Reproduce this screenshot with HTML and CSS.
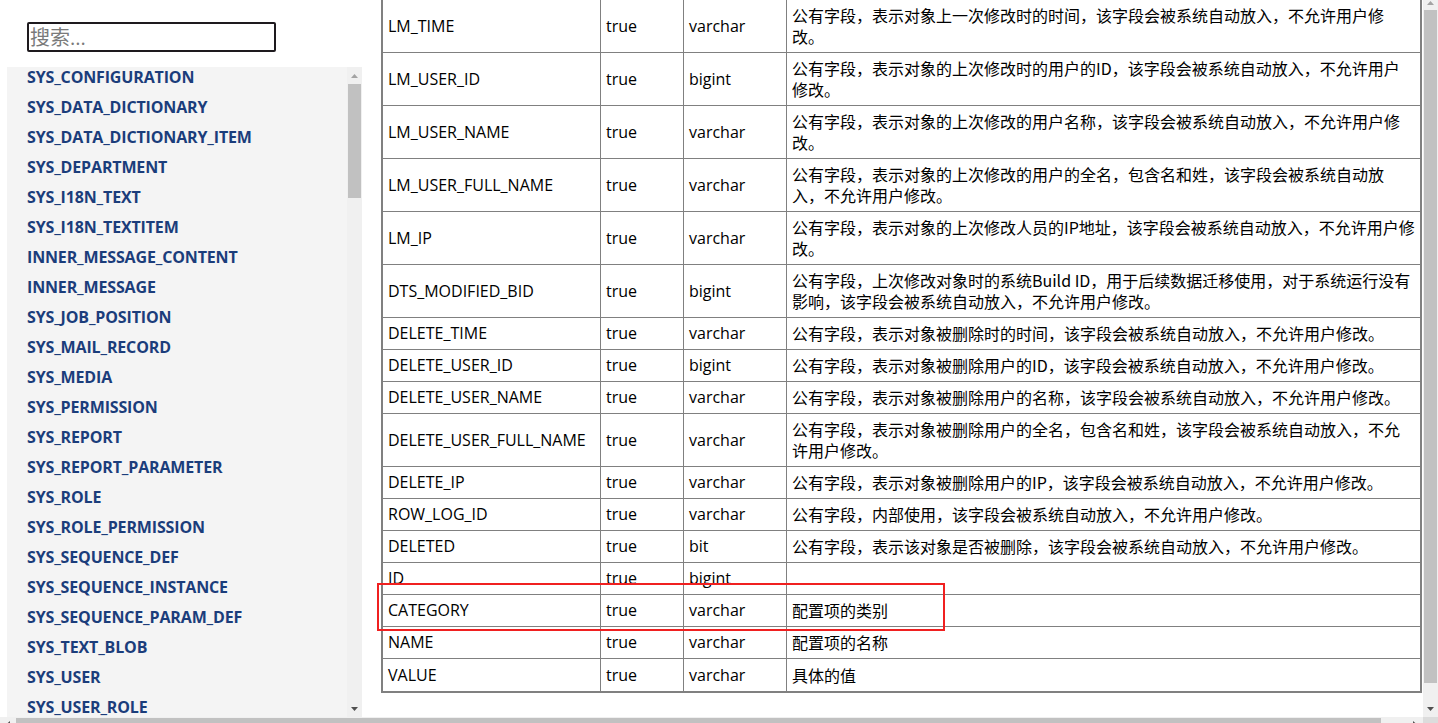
FILE: index.html
```html
<!DOCTYPE html>
<html lang="zh-CN">
<head>
    <meta charset="UTF-8">
    <title>数据字典 - SYS_CONFIGURATION</title>
    <link rel="stylesheet" href="styles.css">
</head>
<body>

<div class="frame">
    <div class="page">
        <aside class="sidebar">
            <input class="search" type="text" placeholder="搜索...">
            <div class="tree">
                <ul class="tree-list">
                    <li><a href="#">SYS_CONFIGURATION</a></li>
                    <li><a href="#">SYS_DATA_DICTIONARY</a></li>
                    <li><a href="#">SYS_DATA_DICTIONARY_ITEM</a></li>
                    <li><a href="#">SYS_DEPARTMENT</a></li>
                    <li><a href="#">SYS_I18N_TEXT</a></li>
                    <li><a href="#">SYS_I18N_TEXTITEM</a></li>
                    <li><a href="#">INNER_MESSAGE_CONTENT</a></li>
                    <li><a href="#">INNER_MESSAGE</a></li>
                    <li><a href="#">SYS_JOB_POSITION</a></li>
                    <li><a href="#">SYS_MAIL_RECORD</a></li>
                    <li><a href="#">SYS_MEDIA</a></li>
                    <li><a href="#">SYS_PERMISSION</a></li>
                    <li><a href="#">SYS_REPORT</a></li>
                    <li><a href="#">SYS_REPORT_PARAMETER</a></li>
                    <li><a href="#">SYS_ROLE</a></li>
                    <li><a href="#">SYS_ROLE_PERMISSION</a></li>
                    <li><a href="#">SYS_SEQUENCE_DEF</a></li>
                    <li><a href="#">SYS_SEQUENCE_INSTANCE</a></li>
                    <li><a href="#">SYS_SEQUENCE_PARAM_DEF</a></li>
                    <li><a href="#">SYS_TEXT_BLOB</a></li>
                    <li><a href="#">SYS_USER</a></li>
                    <li><a href="#">SYS_USER_ROLE</a></li>
                </ul>
                <div class="vbar">
                    <span class="sb-btn off"><svg width="7" height="4" viewBox="0 0 7 4"><path d="M3.5 0L7 4H0z" fill="currentColor"/></svg></span>
                    <span class="sb-thumb tree-thumb"></span>
                    <span class="sb-fill"></span>
                    <span class="sb-btn"><svg width="7" height="4" viewBox="0 0 7 4"><path d="M0 0H7L3.5 4z" fill="currentColor"/></svg></span>
                </div>
            </div>
        </aside>

        <main class="content">
            <table class="fields">
                <colgroup>
                    <col class="c-name">
                    <col class="c-null">
                    <col class="c-type">
                    <col>
                </colgroup>
                <tbody>
                    <tr><td>LM_TIME</td><td>true</td><td>varchar</td><td class="desc">公有字段，表示对象上一次修改时的时间，该字段会被系统自动放入，不允许用户修改。</td></tr>
                    <tr><td>LM_USER_ID</td><td>true</td><td>bigint</td><td class="desc">公有字段，表示对象的上次修改时的用户的ID，该字段会被系统自动放入，不允许用户修改。</td></tr>
                    <tr><td>LM_USER_NAME</td><td>true</td><td>varchar</td><td class="desc">公有字段，表示对象的上次修改的用户名称，该字段会被系统自动放入，不允许用户修改。</td></tr>
                    <tr><td>LM_USER_FULL_NAME</td><td>true</td><td>varchar</td><td class="desc">公有字段，表示对象的上次修改的用户的全名，包含名和姓，该字段会被系统自动放入，不允许用户修改。</td></tr>
                    <tr><td>LM_IP</td><td>true</td><td>varchar</td><td class="desc">公有字段，表示对象的上次修改人员的IP地址，该字段会被系统自动放入，不允许用户修改。</td></tr>
                    <tr><td>DTS_MODIFIED_BID</td><td>true</td><td>bigint</td><td class="desc">公有字段，上次修改对象时的系统Build ID，用于后续数据迁移使用，对于系统运行没有影响，该字段会被系统自动放入，不允许用户修改。</td></tr>
                    <tr><td>DELETE_TIME</td><td>true</td><td>varchar</td><td class="desc">公有字段，表示对象被删除时的时间，该字段会被系统自动放入，不允许用户修改。</td></tr>
                    <tr><td>DELETE_USER_ID</td><td>true</td><td>bigint</td><td class="desc">公有字段，表示对象被删除用户的ID，该字段会被系统自动放入，不允许用户修改。</td></tr>
                    <tr><td>DELETE_USER_NAME</td><td>true</td><td>varchar</td><td class="desc">公有字段，表示对象被删除用户的名称，该字段会被系统自动放入，不允许用户修改。</td></tr>
                    <tr><td>DELETE_USER_FULL_NAME</td><td>true</td><td>varchar</td><td class="desc">公有字段，表示对象被删除用户的全名，包含名和姓，该字段会被系统自动放入，不允许用户修改。</td></tr>
                    <tr><td>DELETE_IP</td><td>true</td><td>varchar</td><td class="desc">公有字段，表示对象被删除用户的IP，该字段会被系统自动放入，不允许用户修改。</td></tr>
                    <tr><td>ROW_LOG_ID</td><td>true</td><td>varchar</td><td class="desc">公有字段，内部使用，该字段会被系统自动放入，不允许用户修改。</td></tr>
                    <tr><td>DELETED</td><td>true</td><td>bit</td><td class="desc">公有字段，表示该对象是否被删除，该字段会被系统自动放入，不允许用户修改。</td></tr>
                    <tr><td>ID</td><td>true</td><td>bigint</td><td class="desc"></td></tr>
                    <tr><td>CATEGORY</td><td>true</td><td>varchar</td><td class="desc">配置项的类别</td></tr>
                    <tr><td>NAME</td><td>true</td><td>varchar</td><td class="desc">配置项的名称</td></tr>
                    <tr><td>VALUE</td><td>true</td><td>varchar</td><td class="desc">具体的值</td></tr>
                </tbody>
            </table>
            <div class="mark"></div>
        </main>
    </div>

    <div class="vbar page-vbar">
        <span class="sb-btn top off"><svg width="7" height="4" viewBox="0 0 7 4"><path d="M3.5 0L7 4H0z" fill="currentColor"/></svg></span>
        <span class="sb-thumb page-thumb"></span>
        <span class="sb-fill"></span>
        <span class="sb-btn"><svg width="7" height="4" viewBox="0 0 7 4"><path d="M0 0H7L3.5 4z" fill="currentColor"/></svg></span>
    </div>
</div>

<div class="hbar">
    <span class="sb-btn side"><svg width="4" height="7" viewBox="0 0 4 7"><path d="M0 3.5L4 0V7z" fill="currentColor"/></svg></span>
    <span class="sb-thumb h-thumb"></span>
    <span class="sb-fill"></span>
    <span class="sb-btn side"><svg width="4" height="7" viewBox="0 0 4 7"><path d="M4 3.5L0 0V7z" fill="currentColor"/></svg></span>
    <span class="corner"></span>
</div>

</body>
</html>
```

FILE: styles.css
```css
* {
    box-sizing: border-box;
}
html, body {
    margin: 0;
    padding: 0;
}
body {
    overflow: hidden;
    background-color: #fff;
    font-family: "Open Sans", "Noto Sans CJK SC", sans-serif;
    color: #000;
}
.frame {
    display: flex;
    height: 717px;
}
.page {
    flex: 1;
    display: flex;
    min-width: 0;
    padding-left: 7px;
}

/* sidebar */
.sidebar {
    width: 355px;
    display: flex;
    flex-direction: column;
    padding-top: 22px;
}
.search {
    width: 249px;
    height: 30px;
    margin: 0 0 15px 20px;
    padding: 0 1px;
    border: 2px solid #1e1a1e;
    border-radius: 2px;
    font-family: "Open Sans", "Noto Sans CJK SC", sans-serif;
    font-size: 20px;
    outline: none;
}
.search::placeholder {
    color: #7a7a7a;
}
.tree {
    flex: 1;
    min-height: 0;
    display: flex;
    background-color: #f4f4f4;
}
.tree-list {
    flex: 1;
    margin: 0;
    padding: 0 0 0 20px;
    list-style: none;
    overflow: hidden;
}
.tree-list li {
    line-height: 20px;
    margin-bottom: 10px;
    white-space: nowrap;
}
.tree-list a {
    color: #1b3d7b;
    font-size: 16px;
    font-weight: 700;
    letter-spacing: -0.15px;
    text-decoration: none;
}

/* scrollbars */
.vbar {
    width: 15px;
    display: flex;
    flex-direction: column;
    background-color: #f0f0f0;
}
.sb-btn {
    height: 17px;
    display: flex;
    align-items: center;
    justify-content: center;
    color: #505050;
}
.sb-btn svg {
    display: block;
}
.sb-btn.off {
    color: #a3a3a3;
}
.sb-thumb {
    background-color: #c1c1c1;
    margin: 0 1px;
}
.sb-fill {
    flex: 1;
}
.tree-thumb {
    height: 114px;
}
.page-vbar .top {
    height: 10px;
    align-items: flex-start;
    padding-top: 1px;
}
.page-thumb {
    height: 673px;
}
.hbar {
    display: flex;
    height: 15px;
    background-color: #f0f0f0;
}
.hbar .sb-btn.side {
    width: 16px;
    height: 15px;
}
.h-thumb {
    width: 1365px;
    margin: 1px 0;
}
.corner {
    width: 15px;
    background-color: #dcdcdc;
}

/* field table */
.content {
    position: relative;
    margin-left: 19px;
}
.fields {
    width: 1041px;
    margin-top: -2px;
    table-layout: fixed;
    border-collapse: separate;
    border-spacing: 0;
    border: 2px solid #808080;
    font-size: 16px;
}
.c-name {
    width: 218px;
}
.c-null {
    width: 83px;
}
.c-type {
    width: 103px;
}
.fields td {
    height: 32px;
    padding: 5px;
    line-height: 21px;
    border-right: 1px solid #808080;
    border-bottom: 1px solid #808080;
    vertical-align: middle;
}
.fields td:last-child {
    border-right: 0;
}
.fields tr:last-child td {
    border-bottom: 0;
}
.fields td.desc {
    font-family: "Noto Sans CJK SC", sans-serif;
}
.mark {
    position: absolute;
    left: -4px;
    top: 583px;
    width: 568px;
    height: 48px;
    border: 2px solid #f02020;
}
```
